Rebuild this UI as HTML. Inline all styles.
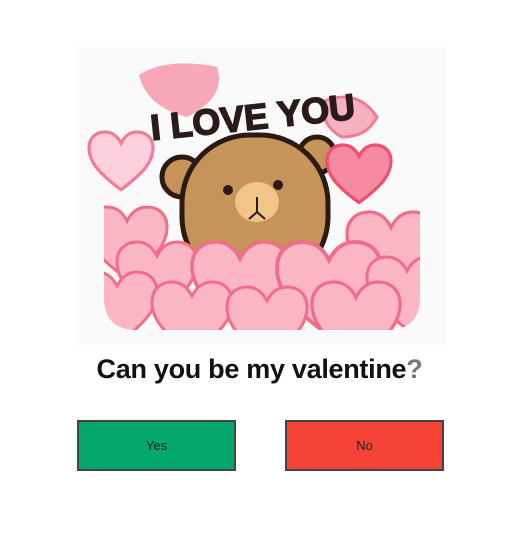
<!DOCTYPE html>
<html><head><meta charset="utf-8"><style>
body{margin:0;width:519px;height:542px;background:#fff;position:relative;font-family:"Liberation Sans",sans-serif;overflow:hidden}
.img{position:absolute;left:77px;top:47px;width:368px;height:298px;background:#fafafa}
h1{position:absolute;left:0;width:519px;top:354px;margin:0;text-align:center;font-size:27px;font-weight:bold;color:#111;letter-spacing:-0.3px}
.btn{position:absolute;top:420px;width:155px;height:47px;border:2px solid #444;box-sizing:content-box;text-align:center;line-height:47px;font-size:13px;color:#222}
</style></head><body>
<div class="img">
<svg width="368" height="298" viewBox="0 0 368 298">
<defs>
<path id="h" d="M20,36 C5,25 0,18 0,10 C0,3 5,0 10,0 C15,0 18,3 20,7 C22,3 25,0 30,0 C35,0 40,3 40,10 C40,18 35,25 20,36Z"/>
<clipPath id="c"><path d="M27,0 H343 V250 Q343,283 310,283 H60 Q27,283 27,250Z"/></clipPath>
</defs>
<path d="M62,28 Q90,10 140,20 Q150,50 110,70 Q70,60 62,28Z" fill="#f7a8b8"/>
<path d="M245,55 Q280,40 300,70 Q290,90 265,90 Q245,80 245,55Z" fill="#f7b2c2" stroke="#f27c96" stroke-width="3"/>
<use href="#h" transform="translate(12,85) scale(1.6)" fill="#fcd0dc" stroke="#f27c96" stroke-width="2"/>
<g clip-path="url(#c)">
<circle cx="105" cy="130" r="20" fill="#c69359" stroke="#2a1a12" stroke-width="5"/>
<circle cx="240" cy="108" r="18" fill="#c69359" stroke="#2a1a12" stroke-width="5"/>
<rect x="105" y="88" width="146" height="150" rx="68" fill="#c69359" stroke="#2a1a12" stroke-width="5"/>
<ellipse cx="180" cy="155" rx="22" ry="20" fill="#f1c48a"/>
<circle cx="151" cy="143" r="5" fill="#2a1a12"/><circle cx="201" cy="138" r="5" fill="#2a1a12"/>
<path d="M180,150 V165 M180,165 L172,172 M180,165 L188,172" stroke="#2a1a12" stroke-width="2" fill="none"/>
<use href="#h" transform="translate(250,98) scale(1.6)" fill="#f58aa0" stroke="#ef4f6f" stroke-width="2"/>
<g fill="#fbb6c4" stroke="#f06d8b" stroke-width="1.5">
<use href="#h" transform="translate(10,160) scale(2)"/>
<use href="#h" transform="translate(270,165) scale(2.2)"/>
<use href="#h" transform="translate(40,195) scale(2)"/>
<use href="#h" transform="translate(115,195) scale(2.4)"/>
<use href="#h" transform="translate(200,195) scale(2.6)"/>
<use href="#h" transform="translate(290,210) scale(2)"/>
<use href="#h" transform="translate(0,225) scale(2)"/>
<use href="#h" transform="translate(75,235) scale(2)"/>
<use href="#h" transform="translate(150,240) scale(2)"/>
<use href="#h" transform="translate(235,235) scale(2.2)"/>
</g>
</g>
<text x="72" y="82" font-family="Liberation Sans" font-weight="bold" font-size="36" fill="#2a1a1a" transform="rotate(-6 180 60)" stroke="#2a1a1a" stroke-width="1.5">I LOVE YOU</text>
</svg>
</div>
<h1>Can you be my valentine<span style="color:#777">?</span></h1>
<div class="btn" style="left:77px;background:#05a86b">Yes</div>
<div class="btn" style="left:285px;background:#f44336">No</div>
</body></html>
